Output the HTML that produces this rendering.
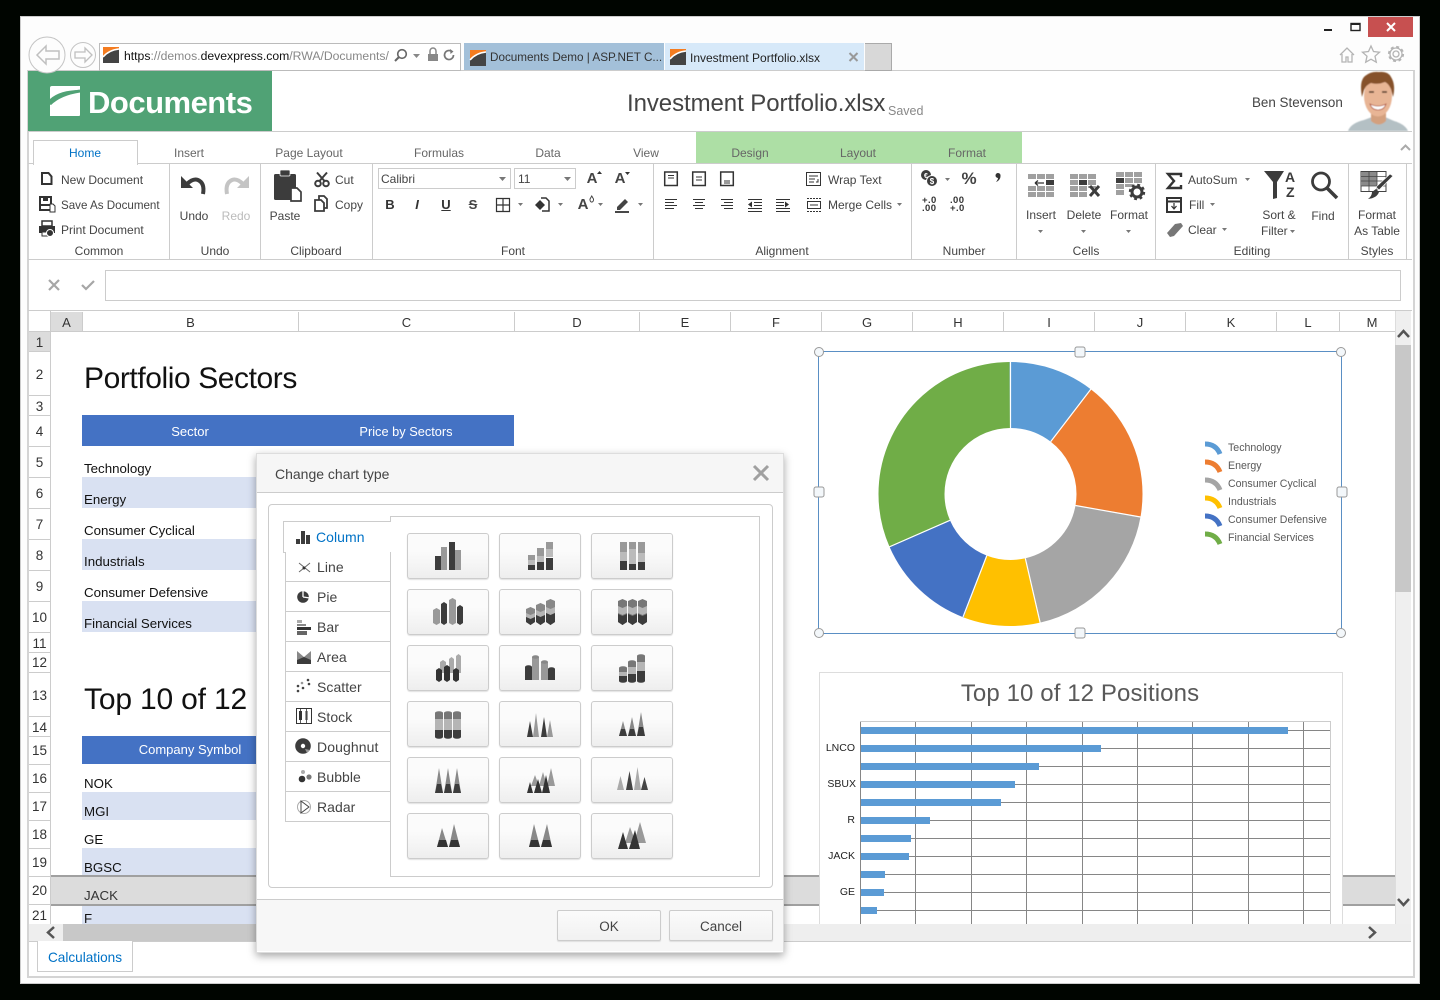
<!DOCTYPE html>
<html lang="en"><head><meta charset="utf-8"><title>Investment Portfolio.xlsx</title>
<style>
html,body{margin:0;padding:0;background:#000500;width:1440px;height:1000px;overflow:hidden}
body{position:relative;font-family:"Liberation Sans",sans-serif;color:#444}
div,span,svg{position:absolute}
svg{left:0;top:0;overflow:visible}
.t{white-space:nowrap;line-height:16px;font-size:12px;letter-spacing:0}
.c{transform:translateX(-50%)}
.tab{color:#666}
.v{background:#ccc;width:1px;top:164px;height:95px}
.cell{font-size:13.3px;color:#111;letter-spacing:0}
.ch{top:312px;height:19px;border-right:1px solid #ccc;text-align:center;line-height:21px;font-size:13px;color:#333}
.rh{left:29px;width:21px;border-bottom:1px solid #ccc;text-align:center;font-size:13.5px;color:#333}
.dt{left:285px;width:104px;height:29px;border:1px solid #ccc;border-top:0;border-right:0;background:#fff}
.dl{font-size:14px;letter-spacing:.05px;color:#444}
.b{width:80px;height:44px;border:1px solid #ccc;border-radius:3px;background:linear-gradient(#fbfbfb 40%,#eeeeee);box-shadow:0 1px 1px rgba(0,0,0,.12)}
.btn{height:29px;width:102px;border:1px solid #ccc;border-radius:2px;background:linear-gradient(#fbfbfb,#f1f1f1);text-align:center;line-height:31px;font-size:13.5px;color:#444;box-shadow:0 1px 1px rgba(0,0,0,.1)}
.bn{background:#d9e1f2;left:82px;width:432px}
.lg{left:1228px;font-size:10.6px;color:#595959}
.ax{font-size:10.5px;color:#222}
</style></head><body>
<!-- window -->
<div style="left:20px;top:16px;width:1398px;height:966px;background:#fdfdfd;border:1px solid #ccc"></div>
<div style="left:1368px;top:17px;width:45px;height:20px;background:#c75050"></div>
<!-- app frame -->
<div style="left:27px;top:70px;width:1384px;height:905px;background:#fff;border:2px solid #d4d4d4;border-top:1px solid #ccc"></div>
<!-- browser tabs -->
<div style="left:99px;top:43px;width:360px;height:26px;background:#fff;border:1px solid #bbb"></div>
<div style="left:464px;top:43px;width:200px;height:27px;background:#a3c0d9"></div>
<div style="left:665px;top:43px;width:199px;height:27px;background:#d7e9f9"></div>
<div style="left:865px;top:43px;width:26px;height:26px;background:#d8d8d8;border:1px solid #aaa;border-left:0"></div>
<span class="t" style="left:124px;top:48px;font-size:12.2px;color:#888"><span style="position:static;color:#111">https</span>://demos.<span style="position:static;color:#111">devexpress.com</span>/RWA/Documents/</span>
<span class="t" style="left:490px;top:50px;font-size:11.7px;color:#333">Documents Demo | ASP.NET C...</span>
<span class="t" style="left:690px;top:50px;font-size:12px;color:#222">Investment Portfolio.xlsx</span>
<!-- header -->
<div style="left:28px;top:71px;width:244px;height:60px;background:#50a275"></div>
<span class="t" style="left:88px;top:87px;font-size:31px;line-height:32px;font-weight:bold;color:#fff;letter-spacing:-.5px">Documents</span>
<span class="t" style="left:627px;top:90px;font-size:24px;line-height:28px;color:#444;letter-spacing:-.07px">Investment Portfolio.xlsx</span>
<span class="t" style="left:888px;top:103px;font-size:12.5px;color:#888">Saved</span>
<span class="t" style="left:1252px;top:95px;font-size:13.4px;color:#444;letter-spacing:0">Ben Stevenson</span>
<div style="left:28px;top:131px;width:1384px;height:1px;background:#ccc"></div>
<!-- ribbon tabs -->
<div style="left:696px;top:132px;width:326px;height:31px;background:#addfa5"></div>
<div style="left:28px;top:163px;width:1384px;height:1px;background:#ccc"></div>
<div style="left:33px;top:140px;width:103px;height:24px;background:#fff;border:1px solid #ccc;border-bottom:0"></div>
<span class="t c" style="left:85px;top:145px;color:#0072c6">Home</span>
<span class="t c tab" style="left:189px;top:145px">Insert</span>
<span class="t c tab" style="left:309px;top:145px">Page Layout</span>
<span class="t c tab" style="left:439px;top:145px">Formulas</span>
<span class="t c tab" style="left:548px;top:145px">Data</span>
<span class="t c tab" style="left:646px;top:145px">View</span>
<span class="t c tab" style="left:750px;top:145px">Design</span>
<span class="t c tab" style="left:858px;top:145px">Layout</span>
<span class="t c tab" style="left:967px;top:145px">Format</span>
<!-- ribbon separators -->
<div class="v" style="left:169px"></div><div class="v" style="left:260px"></div><div class="v" style="left:372px"></div><div class="v" style="left:653px"></div><div class="v" style="left:911px"></div><div class="v" style="left:1016px"></div><div class="v" style="left:1155px"></div><div class="v" style="left:1348px"></div><div class="v" style="left:1406px"></div>
<div style="left:28px;top:259px;width:1384px;height:1px;background:#ccc"></div>
<!-- ribbon text -->
<span class="t" style="left:61px;top:172px">New Document</span>
<span class="t" style="left:61px;top:198px;font-size:11.6px">Save As Document</span>
<span class="t" style="left:61px;top:222px">Print Document</span>
<span class="t c" style="left:99px;top:243px">Common</span>
<span class="t c" style="left:194px;top:208px">Undo</span>
<span class="t c" style="left:236px;top:208px;color:#bbb">Redo</span>
<span class="t c" style="left:215px;top:243px">Undo</span>
<span class="t c" style="left:285px;top:208px">Paste</span>
<span class="t" style="left:335px;top:172px">Cut</span>
<span class="t" style="left:335px;top:197px">Copy</span>
<span class="t c" style="left:316px;top:243px">Clipboard</span>
<div style="left:378px;top:168px;width:131px;height:19px;border:1px solid #ccc"></div>
<div style="left:514px;top:168px;width:60px;height:19px;border:1px solid #ccc"></div>
<span class="t" style="left:381px;top:171px">Calibri</span>
<span class="t" style="left:518px;top:171px">11</span>
<span class="t c" style="left:513px;top:243px">Font</span>
<span class="t c" style="left:592px;top:171px;font-size:15px;font-weight:bold">A</span>
<span class="t c" style="left:620px;top:171px;font-size:15px;font-weight:bold">A</span>
<span class="t c" style="left:390px;top:197px;font-size:13px;font-weight:bold;color:#333">B</span>
<span class="t c" style="left:417px;top:197px;font-size:13px;font-weight:bold;font-style:italic;color:#333">I</span>
<span class="t c" style="left:446px;top:197px;font-size:13px;font-weight:bold;text-decoration:underline;color:#333">U</span>
<span class="t c" style="left:473px;top:197px;font-size:13px;font-weight:bold;text-decoration:line-through;color:#444">S</span>
<span class="t c" style="left:583px;top:197px;font-size:15px;font-weight:bold">A</span>
<span class="t" style="left:828px;top:172px">Wrap Text</span>
<span class="t" style="left:828px;top:197px">Merge Cells</span>
<span class="t c" style="left:782px;top:243px">Alignment</span>
<span class="t c" style="left:969px;top:171px;font-size:17px;font-weight:bold;letter-spacing:0">%</span>
<span class="t c" style="left:964px;top:243px">Number</span>
<span class="t c" style="left:1041px;top:207px">Insert</span>
<span class="t c" style="left:1084px;top:207px">Delete</span>
<span class="t c" style="left:1129px;top:207px">Format</span>
<span class="t c" style="left:1086px;top:243px">Cells</span>
<span class="t" style="left:1188px;top:172px">AutoSum</span>
<span class="t" style="left:1189px;top:197px">Fill</span>
<span class="t" style="left:1188px;top:222px">Clear</span>
<span class="t c" style="left:1279px;top:207px">Sort &amp;</span>
<span class="t" style="left:1261px;top:223px">Filter</span>
<span class="t c" style="left:1323px;top:208px">Find</span>
<span class="t c" style="left:1252px;top:243px">Editing</span>
<span class="t c" style="left:1377px;top:207px">Format</span>
<span class="t c" style="left:1377px;top:223px">As Table</span>
<span class="t c" style="left:1377px;top:243px">Styles</span>
<!-- formula bar -->
<div style="left:105px;top:270px;width:1294px;height:29px;background:#fff;border:1px solid #ccc"></div>
<div style="left:28px;top:310px;width:1384px;height:1px;background:#ccc"></div>
<!-- sheet headers -->
<div class="ch" style="left:51px;width:31px;background:#dcdcdc">A</div>
<div class="ch" style="left:83px;width:215px">B</div>
<div class="ch" style="left:299px;width:215px">C</div>
<div class="ch" style="left:515px;width:124px">D</div>
<div class="ch" style="left:640px;width:90px">E</div>
<div class="ch" style="left:731px;width:90px">F</div>
<div class="ch" style="left:822px;width:90px">G</div>
<div class="ch" style="left:913px;width:90px">H</div>
<div class="ch" style="left:1004px;width:90px">I</div>
<div class="ch" style="left:1095px;width:90px">J</div>
<div class="ch" style="left:1186px;width:90px">K</div>
<div class="ch" style="left:1277px;width:62px">L</div>
<div class="ch" style="left:1340px;width:64px;border-right:0">M</div>
<div style="left:29px;top:331px;width:1366px;height:1px;background:#ccc"></div>
<div style="left:50px;top:311px;width:1px;height:614px;background:#ccc"></div>
<div class="rh" style="top:332px;height:19px;line-height:21px;background:#dcdcdc">1</div>
<div class="rh" style="top:352px;height:43px;line-height:46px">2</div>
<div class="rh" style="top:396px;height:19px;line-height:22px">3</div>
<div class="rh" style="top:416px;height:30px;line-height:31px">4</div>
<div class="rh" style="top:447px;height:30px;line-height:31px">5</div>
<div class="rh" style="top:478px;height:30px;line-height:31px">6</div>
<div class="rh" style="top:509px;height:30px;line-height:31px">7</div>
<div class="rh" style="top:540px;height:30px;line-height:31px">8</div>
<div class="rh" style="top:571px;height:30px;line-height:31px">9</div>
<div class="rh" style="top:602px;height:30px;line-height:31px">10</div>
<div class="rh" style="top:633px;height:19px;line-height:22px">11</div>
<div class="rh" style="top:653px;height:19px;line-height:20px">12</div>
<div class="rh" style="top:673px;height:43px;line-height:45px">13</div>
<div class="rh" style="top:717px;height:19px;line-height:21px">14</div>
<div class="rh" style="top:737px;height:27px;line-height:28px">15</div>
<div class="rh" style="top:765px;height:27px;line-height:28px">16</div>
<div class="rh" style="top:793px;height:27px;line-height:28px">17</div>
<div class="rh" style="top:821px;height:27px;line-height:28px">18</div>
<div class="rh" style="top:849px;height:27px;line-height:28px">19</div>
<div class="rh" style="top:877px;height:27px;line-height:28px">20</div>
<div class="rh" style="top:905px;height:19px;line-height:22px;border-bottom:0">21</div>
<!-- sheet bands -->
<div style="left:82px;top:415px;width:432px;height:31px;background:#4472c4"></div>
<div class="bn" style="top:477px;height:31px"></div>
<div class="bn" style="top:539px;height:31px"></div>
<div class="bn" style="top:601px;height:31px"></div>
<div style="left:82px;top:736px;width:432px;height:28px;background:#4472c4"></div>
<div class="bn" style="top:792px;height:28px"></div>
<div class="bn" style="top:848px;height:28px"></div>
<div class="bn" style="top:906px;height:18px"></div>
<div style="left:51px;top:875px;width:1344px;height:31px;background:#dcdcdc;border-top:2px solid #a0a0a0;border-bottom:2px solid #a0a0a0;box-sizing:border-box"></div>
<span class="t" style="left:84px;top:362px;font-size:30px;line-height:34px;color:#111;letter-spacing:-.42px">Portfolio Sectors</span>
<span class="t" style="left:84px;top:683px;font-size:30px;line-height:34px;color:#111;letter-spacing:-.18px">Top 10 of 12</span>
<span class="t c" style="left:190px;top:424px;font-size:13px;color:#fff">Sector</span>
<span class="t c" style="left:406px;top:424px;font-size:12.8px;color:#fff">Price by Sectors</span>
<span class="t c" style="left:190px;top:742px;font-size:13px;color:#fff">Company Symbol</span>
<span class="t cell" style="left:84px;top:461px">Technology</span>
<span class="t cell" style="left:84px;top:492px">Energy</span>
<span class="t cell" style="left:84px;top:523px">Consumer Cyclical</span>
<span class="t cell" style="left:84px;top:554px">Industrials</span>
<span class="t cell" style="left:84px;top:585px">Consumer Defensive</span>
<span class="t cell" style="left:84px;top:616px">Financial Services</span>
<span class="t cell" style="left:84px;top:776px">NOK</span>
<span class="t cell" style="left:84px;top:804px">MGI</span>
<span class="t cell" style="left:84px;top:832px">GE</span>
<span class="t cell" style="left:84px;top:860px">BGSC</span>
<span class="t cell" style="left:84px;top:888px;color:#333">JACK</span>
<span class="t cell" style="left:84px;top:911px">F</span>
<!-- charts -->
<div style="left:819px;top:672px;width:522px;height:252px;background:#fff;border:1px solid #ddd;border-bottom:0"></div>
<svg width="1440" height="1000" viewBox="0 0 1440 1000">
<g fill="none" stroke-width="66" transform="rotate(-90 1010.5 494)">
<circle cx="1010.5" cy="494" r="99" stroke="#5b9bd5" pathLength="360" stroke-dasharray="37.5 322.5"/>
<circle cx="1010.5" cy="494" r="99" stroke="#ed7d31" pathLength="360" stroke-dasharray="62.5 297.5" stroke-dashoffset="-37.5"/>
<circle cx="1010.5" cy="494" r="99" stroke="#a5a5a5" pathLength="360" stroke-dasharray="67 293" stroke-dashoffset="-100"/>
<circle cx="1010.5" cy="494" r="99" stroke="#ffc000" pathLength="360" stroke-dasharray="34 326" stroke-dashoffset="-167"/>
<circle cx="1010.5" cy="494" r="99" stroke="#4472c4" pathLength="360" stroke-dasharray="45.5 314.5" stroke-dashoffset="-201"/>
<circle cx="1010.5" cy="494" r="99" stroke="#70ad47" pathLength="360" stroke-dasharray="113.5 246.5" stroke-dashoffset="-246.5"/>
</g>
<path d="M1010.5 428V361M1050.7 441.6L1091 389M1075.5 505.5L1140.5 517M1025.3 558.3L1040.2 623M986.8 555.6L963 617M950 520.3L889 547" stroke="#fff" stroke-width="1.2"/>
<g fill="none" stroke-width="5">
<path d="M1205 444Q1216 444 1220 454" stroke="#5b9bd5"/><path d="M1205 462Q1216 462 1220 472" stroke="#ed7d31"/><path d="M1205 480Q1216 480 1220 490" stroke="#a5a5a5"/><path d="M1205 498Q1216 498 1220 508" stroke="#ffc000"/><path d="M1205 516Q1216 516 1220 526" stroke="#4472c4"/><path d="M1205 534Q1216 534 1220 544" stroke="#70ad47"/>
</g>
<rect x="818.5" y="351.5" width="523" height="282" fill="none" stroke="#5a8fc4"/>
<g fill="#f3f7fa" stroke="#999">
<circle cx="819" cy="352" r="4.5"/><circle cx="1341" cy="352" r="4.5"/><circle cx="819" cy="633" r="4.5"/><circle cx="1341" cy="633" r="4.5"/>
<rect x="1075" y="347" width="10" height="10" rx="2"/><rect x="814" y="487" width="10" height="10" rx="2"/><rect x="1337" y="487" width="10" height="10" rx="2"/><rect x="1075" y="628" width="10" height="10" rx="2"/>
</g>
<path d="M860.5 721V924M915.5 721V924M971.5 721V924M1026.5 721V924M1082.5 721V924M1137.5 721V924M1192.5 721V924M1248.5 721V924M1303.5 721V924M860 730.5H1331M860 748.5H1331M860 766.5H1331M860 784.5H1331M860 802.5H1331M860 820.5H1331M860 838.5H1331M860 856.5H1331M860 874.5H1331M860 892.5H1331M860 910.5H1331" stroke="#868686" fill="none"/>
<path d="M860 721.5H1331M1330.5 721V924" stroke="#ccc" fill="none"/>
<g fill="#5b9bd5">
<rect x="861" y="727" width="427" height="7"/><rect x="861" y="745" width="240" height="7"/><rect x="861" y="763" width="178" height="7"/><rect x="861" y="781" width="154" height="7"/><rect x="861" y="799" width="140" height="7"/><rect x="861" y="817" width="69" height="7"/><rect x="861" y="835" width="50" height="7"/><rect x="861" y="853" width="48" height="7"/><rect x="861" y="871" width="24" height="7"/><rect x="861" y="889" width="23" height="7"/><rect x="861" y="907" width="16" height="7"/>
</g>
</svg>
<span class="t lg" style="top:440px">Technology</span>
<span class="t lg" style="top:458px">Energy</span>
<span class="t lg" style="top:476px">Consumer Cyclical</span>
<span class="t lg" style="top:494px">Industrials</span>
<span class="t lg" style="top:512px">Consumer Defensive</span>
<span class="t lg" style="top:530px">Financial Services</span>
<span class="t c" style="left:1080px;top:680px;font-size:24px;line-height:28px;color:#595959;letter-spacing:.1px">Top 10 of 12 Positions</span>
<span class="t ax" style="right:585px;top:740px">LNCO</span>
<span class="t ax" style="right:584px;top:776px">SBUX</span>
<span class="t ax" style="right:585px;top:812px">R</span>
<span class="t ax" style="right:585px;top:848px">JACK</span>
<span class="t ax" style="right:585px;top:884px">GE</span>
<!-- scrollbars -->
<div style="left:1395px;top:311px;width:16px;height:613px;background:#efefef;border-left:1px solid #ddd;box-sizing:border-box"></div>
<div style="left:1395px;top:345px;width:16px;height:247px;background:#c8c8c8"></div>
<div style="left:29px;top:924px;width:1382px;height:17px;background:#eee"></div>
<div style="left:63px;top:924px;width:300px;height:17px;background:#c8c8c8"></div>
<div style="left:29px;top:941px;width:1382px;height:1px;background:#ccc"></div>
<div style="left:37px;top:941px;width:94px;height:30px;background:#fff;border:1px solid #ccc;border-top:0"></div>
<span class="t c" style="left:85px;top:950px;font-size:13.6px;color:#0072c6;letter-spacing:0">Calculations</span>
<!-- chrome + ribbon icons -->
<svg width="1440" height="1000" viewBox="0 0 1440 1000">
<defs>
<g id="fav"><rect width="16" height="16" fill="#f47c20"/><path d="M0 16V10Q6 3 16 2V16Z" fill="#444"/><path d="M0 10Q6 3 16 2" stroke="#fff" stroke-width="1.6" fill="none"/></g>
<filter id="soft"><feGaussianBlur stdDeviation=".45"/></filter>
</defs>
<use href="#fav" x="103" y="47"/><use href="#fav" x="470" y="50"/><use href="#fav" x="670" y="49"/>
<!-- logo -->
<path d="M52 86H80V115Q80 116 79 116H50V105Q60 95 80 92V90Q60 90 50 99V88Q50 86 52 86Z" fill="#fff"/>
<path d="M50 104Q60 94 80 91" stroke="#50a275" stroke-width="3" fill="none"/>
<!-- window buttons -->
<path d="M1324 30h8" stroke="#222" stroke-width="2"/>
<rect x="1351" y="23.5" width="9" height="7" fill="none" stroke="#222" stroke-width="1.4"/><path d="M1351 24h9" stroke="#222" stroke-width="2"/>
<path d="M1387 23l8 8m0-8l-8 8" stroke="#fff" stroke-width="2"/>
<!-- nav -->
<circle cx="47" cy="55" r="18" fill="#fdfdfd" stroke="#c4c4c4"/><circle cx="83" cy="55" r="12.5" fill="#fdfdfd" stroke="#c4c4c4"/>
<path d="M37 55l9-9v5h13v8H46v5z" fill="none" stroke="#c0c0c0" stroke-width="1.5"/>
<path d="M92 55l-7-7v4H75v6h10v4z" fill="none" stroke="#c0c0c0" stroke-width="1.3"/>
<!-- address tools -->
<circle cx="402" cy="54" r="4.3" fill="none" stroke="#666" stroke-width="1.6"/><path d="M399 57l-4 4" stroke="#666" stroke-width="2"/>
<path d="M413 54h7l-3.500 4z" fill="#888"/>
<rect x="428" y="54" width="10" height="7" fill="#888"/><path d="M430 54v-3a3 3 0 016 0v3" fill="none" stroke="#888" stroke-width="1.500"/>
<path d="M453.500 55a4.500 4.500 0 11-2-3.700" fill="none" stroke="#777" stroke-width="1.700"/><path d="M450 49l3.500 2.500-3 2.500z" fill="#777"/>
<path d="M849.500 53l8 8m0-8l-8 8" stroke="#999" stroke-width="2"/>
<!-- right tools -->
<path d="M1340 55l7-7 7 7m-12-1v8h4v-5h2v5h4v-8" fill="none" stroke="#b4b4b4" stroke-width="1.300"/>
<path d="M1371 46l2.500 5.500 6 .7-4.500 4 1.300 6-5.300-3-5.300 3 1.300-6-4.500-4 6-.7z" fill="none" stroke="#b4b4b4" stroke-width="1.300"/>
<circle cx="1396" cy="54" r="3" fill="none" stroke="#b4b4b4" stroke-width="1.300"/><circle cx="1396" cy="54" r="6" fill="none" stroke="#b4b4b4" stroke-width="1.300"/><circle cx="1396" cy="54" r="7.200" fill="none" stroke="#b4b4b4" stroke-width="1.800" stroke-dasharray="3 2.650"/>
<!-- avatar -->
<g filter="url(#soft)">
<path d="M1348 131q3-8 16-11l8-3h13l9 4q11 3 14 10z" fill="#b4c0c4"/>
<path d="M1371 112h15v9q-7 7-15 0z" fill="#d3a07e"/>
<ellipse cx="1378" cy="96" rx="14" ry="20.500" fill="#e8b595"/>
<path d="M1362 97q-3-16 3-21 6-5 14-4 9-1 12 5 5 8 2 20l-2-8q-3-6-6-7-7 3-14 1-5 2-7 7z" fill="#86512a"/>
<path d="M1370 104q8 4 16 0q-2 6-8 6t-8-6z" fill="#fff" stroke="#b0553f" stroke-width=".8"/>
<path d="M1369 92h5M1382 92h5" stroke="#4a3020" stroke-width="1.600"/>
</g>
<!-- chevron -->
<path d="M1401 150l4.500-4.500 4.500 4.500" fill="none" stroke="#aaa" stroke-width="2"/>
<!-- common -->
<path d="M42 173h6.500l3 3.500V184H42z" fill="none" stroke="#333" stroke-width="2"/>
<path d="M40 197h11v13H40z" fill="none" stroke="#333" stroke-width="2"/><rect x="43" y="197" width="5" height="4" fill="#333"/><path d="M40 205h10" stroke="#333" stroke-width="2"/><path d="M50 204h3l2 2v6h-5z" fill="#fff" stroke="#333"/>
<path d="M42 221h10v5H42z" fill="none" stroke="#333" stroke-width="1.500"/><rect x="39" y="226" width="16" height="7" fill="#333"/><rect x="42" y="232" width="8" height="4" fill="#fff" stroke="#333"/><circle cx="50" cy="233" r="3.500" fill="#333" stroke="#fff"/>
<!-- undo/redo -->
<path d="M187 184Q193 178 198 180Q205 183 203 194" fill="none" stroke="#3c3c3c" stroke-width="4"/><path d="M181 176V188H193z" fill="#3c3c3c"/>
<path d="M243 184Q237 178 232 180Q225 183 227 194" fill="none" stroke="#c4c4c4" stroke-width="4"/><path d="M249 176V188H237z" fill="#c4c4c4"/>
<!-- paste -->
<rect x="274" y="174" width="22" height="26" rx="1.500" fill="#3c3c3c"/><rect x="280" y="170" width="10" height="6" rx="1" fill="#3c3c3c" stroke="#fdfdfd" stroke-width=".7"/><path d="M291 188h6l4 4v9H291z" fill="#fff" stroke="#3c3c3c" stroke-width="1.700"/>
<!-- cut -->
<circle cx="318" cy="183.500" r="2.800" fill="none" stroke="#3c3c3c" stroke-width="2"/><circle cx="326" cy="183.500" r="2.800" fill="none" stroke="#3c3c3c" stroke-width="2"/><path d="M319.500 181L327 172.500M324.500 181L317 172.500" stroke="#3c3c3c" stroke-width="2"/>
<!-- copy -->
<path d="M319 196h5l3 3v9h-8z" fill="none" stroke="#3c3c3c" stroke-width="1.800"/><path d="M315 200h6l3 3v8h-9z" fill="#fff" stroke="#3c3c3c" stroke-width="1.800"/>
<!-- font -->
<path d="M499 177h7l-3.500 4zM564 177h7l-3.500 4z" fill="#777"/>
<path d="M597 174l2.500-3 2.500 3zM625 172l2.500 3 2.500-3z" fill="#333"/>
<path d="M496.500 198.500h13v13h-13zM503 198v14M496 205h14" fill="none" stroke="#333" stroke-width="1.200"/>
<path d="M541 198l5 0 3 3v10h-7" fill="none" stroke="#333" stroke-width="1.500"/><path d="M535 205l5-5 5 5-5 5z" fill="#333"/>
<path d="M590 199a1.800 2.500 0 103.500 0l-1.750-3z" fill="none" stroke="#444"/>
<path d="M617 207l8-8 3 3-8 8h-3z" fill="#444"/><path d="M615 212h14" stroke="#333" stroke-width="1.800"/>
<path d="M518 203h5l-2.500 3zM558 203h5l-2.500 3zM598 203h5l-2.500 3zM638 203h5l-2.500 3zM897 203h5l-2.500 3zM945 178h5l-2.500 3zM1245 178h5l-2.500 3zM1210 203h5l-2.500 3zM1222 228h5l-2.500 3zM1038 230h5l-2.500 3zM1081 230h5l-2.500 3zM1126 230h5l-2.500 3zM1290 230h5l-2.500 3z" fill="#777"/>
<!-- alignment -->
<g fill="none" stroke="#333">
<rect x="664.700" y="172" width="12.600" height="13.500" stroke-width="1.500"/><rect x="692.700" y="172" width="12.600" height="13.500" stroke-width="1.500"/><rect x="720.700" y="172" width="12.600" height="13.500" stroke-width="1.500"/>
<path d="M668 175.500h6M668 178h6M696 177h6M696 180h6M724 181h6M724 183h6"/>
<path d="M665 199.500h12M665 202.500h9M665 205.500h12M665 208.500h9M693 199.500h12M695 202.500h8M693 205.500h12M695 208.500h8M721 199.500h12M724 202.500h9M721 205.500h12M724 208.500h9"/>
<path d="M748 199.500h14M754 202.500h8M754 205.500h8M748 208.500h14M748 211.500h14M776 199.500h14M776 202.500h8M776 205.500h8M776 208.500h14M776 211.500h14"/>
<path d="M806.500 172.500h14v13h-14zM809 176h9M809 179h6M809 182h5M818 179v3h-2"/>
<path d="M807 198.500h14M807 211.500h14" stroke-dasharray="2 1"/><path d="M807.500 201.500h13v7h-13z"/><path d="M810 205h8"/>
</g>
<path d="M748 205l4-3v6zM789 205l-4-3v6z" fill="#333" transform="translate(0 -.5)"/>
<!-- number -->
<circle cx="926" cy="175" r="5" fill="#3c3c3c"/><circle cx="932" cy="181" r="5.500" fill="#3c3c3c" stroke="#fdfdfd"/>
<text x="926" y="178" font-size="7" font-weight="bold" fill="#fff" text-anchor="middle" font-family="Liberation Sans">€</text>
<text x="932" y="184" font-size="8" font-weight="bold" fill="#fff" text-anchor="middle" font-family="Liberation Sans">$</text>
<path d="M998 173a2.500 2.500 0 012.500 3c0 3-2 5-4.500 6 1-1.500 2-2.500 2-4a2.500 2.500 0 010-5z" fill="#333"/>
<!-- cells -->
<g fill="#a0a0a0">
<path d="M1028 174h8v5h-8zM1037 174h8v5h-8zM1046 174h8v5h-8zM1028 186h8v5h-8zM1037 186h8v5h-8zM1046 186h8v5h-8zM1028 192h8v5h-8zM1037 192h8v5h-8zM1046 192h8v5h-8z"/>
<path d="M1070 174h8v5h-8zM1079 174h8v5h-8zM1088 174h8v5h-8zM1070 180h8v5h-8zM1088 180h8v5h-8zM1070 186h8v5h-8zM1079 186h8v5h-8zM1088 186h8v2h-8zM1070 192h8v5h-8zM1079 192h8v5h-8z"/>
<path d="M1116 172h8v5h-8zM1125 172h8v5h-8zM1134 172h8v5h-8zM1125 178h8v5h-8zM1134 178h8v5h-8zM1116 184h8v5h-8zM1125 184h8v3h-8zM1116 190h8v5h-8z"/>
</g>
<path d="M1046 180h8v5h-8zM1079 180h8v5h-8zM1116 178h8v5h-8z" fill="#3c3c3c"/>
<path d="M1035 183h9M1035 183l3-2.500M1035 183l3 2.500" stroke="#333" stroke-width="1.300" fill="none"/>
<path d="M1090 186l9 10m0-10l-9 10" stroke="#3c3c3c" stroke-width="3"/>
<circle cx="1137" cy="192" r="5" fill="none" stroke="#3c3c3c" stroke-width="3"/><circle cx="1137" cy="192" r="7" fill="none" stroke="#3c3c3c" stroke-width="2.400" stroke-dasharray="2.800 2.700"/>
<!-- editing -->
<path d="M1181 177v-3h-13l6 7-6 7h13v-3" fill="none" stroke="#333" stroke-width="2.400"/>
<rect x="1167" y="198" width="14" height="14" fill="none" stroke="#333" stroke-width="2"/><path d="M1167 201.500h14" stroke="#333" stroke-width="2"/><path d="M1174 203v5m-2.500-2l2.500 3 2.500-3" stroke="#333" fill="none" stroke-width="1.200"/>
<path d="M1167 233l8-9 6-1 2 3-9 10-4 1z" fill="#777"/>
<path d="M1264 171h20l-7 11v16l-4 1v-17z" fill="#3c3c3c"/>
<circle cx="1321" cy="181.500" r="8.500" fill="none" stroke="#3c3c3c" stroke-width="2.800"/><path d="M1327 188l10 10" stroke="#3c3c3c" stroke-width="3.500"/>
<!-- format table -->
<rect x="1361" y="171.500" width="25" height="20" fill="#fff" stroke="#444"/><path d="M1361 172h16v14h-16z" fill="#8a8a8a"/><path d="M1361 176.500h25M1361 181h25M1361 186h25M1369 171v21M1377 171v21" stroke="#444" stroke-width=".8" fill="none"/>
<path d="M1393 176l-14 14-3-3 14-13z" fill="#3c3c3c" stroke="#fdfdfd" stroke-width=".6"/><path d="M1376 189l3 3q-2 6-11 7 4-3 4-7z" fill="#3c3c3c"/>
<!-- formula -->
<path d="M49 280l10 10m0-10l-10 10" stroke="#a6a6a6" stroke-width="2.200"/><path d="M82 285l4 4 8-8" stroke="#a6a6a6" stroke-width="2.200" fill="none"/>
<!-- scroll arrows -->
<path d="M1398 337l5.500-6 5.500 6M1398 899l5.500 6 5.500-6" fill="none" stroke="#555" stroke-width="2.500"/>
<path d="M54 927l-6 5.500 6 5.500M1369 927l6 5.500-6 5.500" fill="none" stroke="#555" stroke-width="2.500"/>
</svg>
<span class="t" style="left:1285px;top:170px;font-size:14px;line-height:14px;font-weight:bold;color:#3c3c3c">A</span>
<span class="t" style="left:1286px;top:185px;font-size:14px;line-height:14px;font-weight:bold;color:#3c3c3c">Z</span>
<span class="t" style="left:922px;top:197px;font-size:9.5px;line-height:8px;font-weight:bold;color:#333;letter-spacing:.4px">+.0<br>.00</span>
<span class="t" style="left:950px;top:197px;font-size:9.5px;line-height:8px;font-weight:bold;color:#333;letter-spacing:.4px">.00<br>+.0</span>
<!-- dialog -->
<div style="left:256px;top:453px;width:526px;height:498px;background:#fff;border:1px solid #ddd;box-shadow:0 3px 8px rgba(0,0,0,.35)"></div>
<div style="left:257px;top:454px;width:526px;height:38px;background:#f6f6f6;border-bottom:1px solid #ccc"></div>
<span class="t" style="left:275px;top:466px;font-size:14px;color:#444;letter-spacing:0">Change chart type</span>
<div style="left:268px;top:504px;width:503px;height:382px;border:1px solid #ccc;border-radius:4px"></div>
<div style="left:390px;top:516px;width:368px;height:359px;border:1px solid #ccc"></div>
<div style="left:283px;top:521px;width:107px;height:30px;background:#fff;border:1px solid #ccc;border-right:0;box-sizing:content-box"></div>
<div style="left:390px;top:522px;width:1px;height:30px;background:#fff"></div>
<div class="dt" style="top:552px"></div><div class="dt" style="top:582px"></div><div class="dt" style="top:612px"></div><div class="dt" style="top:642px"></div><div class="dt" style="top:672px"></div><div class="dt" style="top:702px"></div><div class="dt" style="top:732px"></div><div class="dt" style="top:762px"></div><div class="dt" style="top:792px"></div>
<span class="t dl" style="left:316px;top:529px;color:#0072c6">Column</span>
<span class="t dl" style="left:317px;top:559px">Line</span>
<span class="t dl" style="left:317px;top:589px">Pie</span>
<span class="t dl" style="left:317px;top:619px">Bar</span>
<span class="t dl" style="left:317px;top:649px">Area</span>
<span class="t dl" style="left:317px;top:679px">Scatter</span>
<span class="t dl" style="left:317px;top:709px">Stock</span>
<span class="t dl" style="left:317px;top:739px;letter-spacing:.1px">Doughnut</span>
<span class="t dl" style="left:317px;top:769px">Bubble</span>
<span class="t dl" style="left:317px;top:799px">Radar</span>
<div class="b" style="left:407px;top:533px"></div><div class="b" style="left:499px;top:533px"></div><div class="b" style="left:591px;top:533px"></div>
<div class="b" style="left:407px;top:589px"></div><div class="b" style="left:499px;top:589px"></div><div class="b" style="left:591px;top:589px"></div>
<div class="b" style="left:407px;top:645px"></div><div class="b" style="left:499px;top:645px"></div><div class="b" style="left:591px;top:645px"></div>
<div class="b" style="left:407px;top:701px"></div><div class="b" style="left:499px;top:701px"></div><div class="b" style="left:591px;top:701px"></div>
<div class="b" style="left:407px;top:757px"></div><div class="b" style="left:499px;top:757px"></div><div class="b" style="left:591px;top:757px"></div>
<div class="b" style="left:407px;top:813px"></div><div class="b" style="left:499px;top:813px"></div><div class="b" style="left:591px;top:813px"></div>
<div style="left:257px;top:899px;width:526px;height:52px;background:#f7f7f7;border-top:1px solid #ccc;box-sizing:border-box"></div>
<div class="btn" style="left:557px;top:910px">OK</div>
<div class="btn" style="left:669px;top:910px">Cancel</div>
<svg width="1440" height="1000" viewBox="0 0 1440 1000">
<path d="M754 466l14 14m0-14l-14 14" stroke="#a0a0a0" stroke-width="3"/>
<!-- tab icons -->
<path d="M296 539h4v5h-4zM301 531h4v13h-4zM306 535h4v9h-4z" fill="#3c3c3c"/>
<path d="M299 563l11 9M299 572l5-4 6-5" stroke="#666" fill="none"/><circle cx="304" cy="568" r="1.500" fill="#333"/>
<circle cx="303" cy="597" r="5.800" fill="#3c3c3c"/><path d="M303 597V590M303 597l7 1" stroke="#fff" stroke-width="1.300"/>
<path d="M297 620h5v3h-5z" fill="#aaa"/><path d="M297 624h9v2h-9z" fill="#888"/><path d="M297 627h14v3h-14z" fill="#333"/><path d="M297 631h10v4h-10z" fill="#666"/>
<path d="M297 651l7 6 7-6v13h-14z" fill="#888"/><path d="M297 664v-4l7-3 7 3v4z" fill="#3c3c3c"/>
<g fill="#444"><circle cx="298" cy="686" r="1.300"/><circle cx="298" cy="691" r="1.300"/><circle cx="303" cy="688" r="1.300"/><circle cx="308" cy="680" r="1.300"/><circle cx="302" cy="683" r="1.300" fill="#999"/><circle cx="309" cy="684" r="1.300"/></g>
<rect x="296.500" y="708.500" width="15" height="15" fill="none" stroke="#333"/><path d="M299 711h3v9h-3z" fill="#333"/><path d="M305 711h3v9h-3z" fill="#999"/><path d="M300.500 709v14M306.500 709v14" stroke="#333" stroke-width=".8"/>
<circle cx="303" cy="746" r="7.800" fill="#3c3c3c"/><circle cx="303" cy="746" r="2.200" fill="#fff"/><path d="M305 749l5 1-3 3z" fill="#999"/>
<circle cx="302" cy="779" r="3.300" fill="#333"/><circle cx="309" cy="777" r="2.600" fill="#777"/><circle cx="303" cy="772" r="2" fill="#aaa"/>
<circle cx="304" cy="807" r="6.500" fill="none" stroke="#aaa"/><path d="M301 801l8 6-8 6z" fill="#fff" stroke="#444"/>
<!-- row 1 -->
<path d="M435 556h6v14h-6zM449 542h6v28h-6z" fill="#3c3c3c"/><path d="M441 547h6v23h-6zM455 550h6v20h-6z" fill="#999"/>
<path d="M528 555h7v5h-7zM537 548h7v8h-7zM546 542h7v7h-7z" fill="#999"/><path d="M528 560h7v5h-7zM537 556h7v6h-7zM546 549h7v8h-7z" fill="#bbb"/><path d="M528 565h7v5h-7zM537 562h7v8h-7zM546 558h7v12h-7z" fill="#3c3c3c"/>
<path d="M620 542h7v10h-7zM629 542h7v7h-7zM638 542h7v11h-7z" fill="#999"/><path d="M620 552h7v9h-7zM629 549h7v15h-7zM638 553h7v9h-7z" fill="#bbb"/><path d="M620 561h7v9h-7zM629 564h7v6h-7zM638 562h7v8h-7z" fill="#3c3c3c"/>
<!-- row 2: hex columns -->
<path d="M433 610l3.500-2 3.500 2v13l-3.500 2-3.500-2zM449 600l3.500-2 3.500 2v23l-3.500 2-3.500-2z" fill="#999"/>
<path d="M441 604l3-2 3 2v19l-3 2-3-2zM457 607l3-2 3 2v16l-3 2-3-2z" fill="#3c3c3c"/>
<path d="M526 609l4.500-2 4.500 2v13l-4.500 3-4.500-3zM536 605l4.500-2 4.500 2v17l-4.500 3-4.500-3zM546 601l4.500-2 4.500 2v21l-4.500 3-4.500-3z" fill="#888"/>
<path d="M526 613l4.500 2 4.500-2v4l-4.500 2-4.500-2zM536 610l4.500 2 4.500-2v5l-4.500 2-4.500-2zM546 607l4.500 2 4.500-2v6l-4.500 2-4.500-2z" fill="#b5b5b5"/>
<path d="M526 617l4.500 2 4.500-2v5l-4.500 3-4.500-3zM536 615l4.500 2 4.500-2v7l-4.500 3-4.500-3zM546 613l4.500 2 4.500-2v9l-4.500 3-4.500-3z" fill="#3c3c3c"/>
<path d="M618 601l4.500-2 4.500 2v21l-4.500 3-4.500-3zM628 601l4.500-2 4.500 2v21l-4.500 3-4.500-3zM638 601l4.500-2 4.500 2v21l-4.500 3-4.500-3z" fill="#777"/>
<path d="M618 606l4.500 2 4.500-2v7l-4.500 2-4.500-2zM628 606l4.500 2 4.500-2v7l-4.500 2-4.500-2zM638 606l4.500 2 4.500-2v7l-4.500 2-4.500-2z" fill="#b5b5b5"/>
<path d="M618 614l4.500 2 4.500-2v8l-4.500 3-4.500-3zM628 614l4.500 2 4.500-2v8l-4.500 3-4.500-3zM638 614l4.500 2 4.500-2v8l-4.500 3-4.500-3z" fill="#3c3c3c"/>
<!-- row 3 -->
<path d="M440 662l3-2 3 2v11h-6zM449 659l2.500-2 2.500 2v14h-5zM456 656l2.500-2 2.500 2v17h-5z" fill="#aaa"/>
<path d="M436 670l3-2 3 2v10l-3 2-3-2zM444 667l3-2 3 2v13l-3 2-3-2zM453 670l3-2 3 2v10l-3 2-3-2z" fill="#333"/>
<path d="M525 667h7v13h-7zM548 669h7v11h-7z" fill="#3c3c3c"/><path d="M532 657h7v23h-7zM541 662h7v18h-7z" fill="#999"/><ellipse cx="528.500" cy="667" rx="3.500" ry="1.800" fill="#3c3c3c"/><ellipse cx="535.500" cy="657" rx="3.500" ry="1.800" fill="#888"/><ellipse cx="544.500" cy="662" rx="3.500" ry="1.800" fill="#888"/><ellipse cx="551.500" cy="669" rx="3.500" ry="1.800" fill="#3c3c3c"/>
<path d="M619 668h8v4h-8zM628 662h8v5h-8zM637 656h8v6h-8z" fill="#777"/><path d="M619 672h8v4h-8zM628 667h8v7h-8zM637 662h8v9h-8z" fill="#b5b5b5"/><path d="M619 676h8v5h-8zM628 674h8v7h-8zM637 671h8v10h-8z" fill="#3c3c3c"/>
<ellipse cx="623" cy="668" rx="4" ry="1.700" fill="#777"/><ellipse cx="632" cy="662" rx="4" ry="1.700" fill="#777"/><ellipse cx="641" cy="656" rx="4" ry="1.700" fill="#777"/><ellipse cx="623" cy="681" rx="4" ry="1.700" fill="#3c3c3c"/><ellipse cx="632" cy="681" rx="4" ry="1.700" fill="#3c3c3c"/><ellipse cx="641" cy="681" rx="4" ry="1.700" fill="#3c3c3c"/>
<!-- row 4 -->
<path d="M435 713h8v6h-8zM444 713h8v6h-8zM453 713h8v6h-8z" fill="#777"/><path d="M435 719h8v11h-8zM444 719h8v11h-8zM453 719h8v11h-8z" fill="#b5b5b5"/><path d="M435 730h8v7h-8zM444 730h8v7h-8zM453 730h8v7h-8z" fill="#3c3c3c"/>
<ellipse cx="439" cy="713" rx="4" ry="1.700" fill="#777"/><ellipse cx="448" cy="713" rx="4" ry="1.700" fill="#777"/><ellipse cx="457" cy="713" rx="4" ry="1.700" fill="#777"/><ellipse cx="439" cy="737" rx="4" ry="1.700" fill="#3c3c3c"/><ellipse cx="448" cy="737" rx="4" ry="1.700" fill="#3c3c3c"/><ellipse cx="457" cy="737" rx="4" ry="1.700" fill="#3c3c3c"/>
<path d="M527 737l3-16 3 16zM541 737l3-20 3 20z" fill="#3c3c3c"/><path d="M533 737l3-24 3 24zM547 737l3-17 3 17z" fill="#999"/>
<path d="M619 736l4-15 4 15zM628 736l4-19 4 19zM637 736l4-24 4 24z" fill="#888"/><path d="M619 736l2-7h4l2 7zM628 736l2-7h4l2 7zM637 736l2-9h4l2 9z" fill="#3c3c3c"/>
<!-- row 5 -->
<path d="M435 793l4-25 4 25zM444 793l4-25 4 25zM453 793l4-25 4 25z" fill="#888"/><path d="M435 793l2-9h4l2 9zM444 793l2-9h4l2 9zM453 793l2-9h4l2 9z" fill="#3c3c3c"/>
<path d="M531 786l4-11 4 11zM539 786l4-14 4 14zM547 786l4-18 4 18z" fill="#999"/><path d="M527 793l3-11 3 11zM534 793l4-14 4 14zM542 793l4-18 4 18z" fill="#333"/>
<path d="M617 790l3.500-14 3.500 14zM634 790l3.500-23 3.500 23z" fill="#aaa"/><path d="M626 790l3.500-19 3.500 19zM641 790l3.500-13 3.500 13z" fill="#444"/>
<!-- row 6 -->
<path d="M437 847l5-19 6 19zM449 847l5-23 6 23z" fill="#888"/><path d="M437 847l2-7h7l2 7zM449 847l2-7h7l2 7z" fill="#333"/>
<path d="M529 847l5-23 6 23zM541 847l6-23 5 23z" fill="#888"/><path d="M529 847l2-7h7l2 7zM541 847l2-7h7l2 7z" fill="#333"/>
<path d="M625 843l5-16 6 16zM634 843l6-21 6 21z" fill="#999"/><path d="M618 849l5-17 5 17zM629 849l6-19 5 19z" fill="#333"/>
</svg>
</body></html>
